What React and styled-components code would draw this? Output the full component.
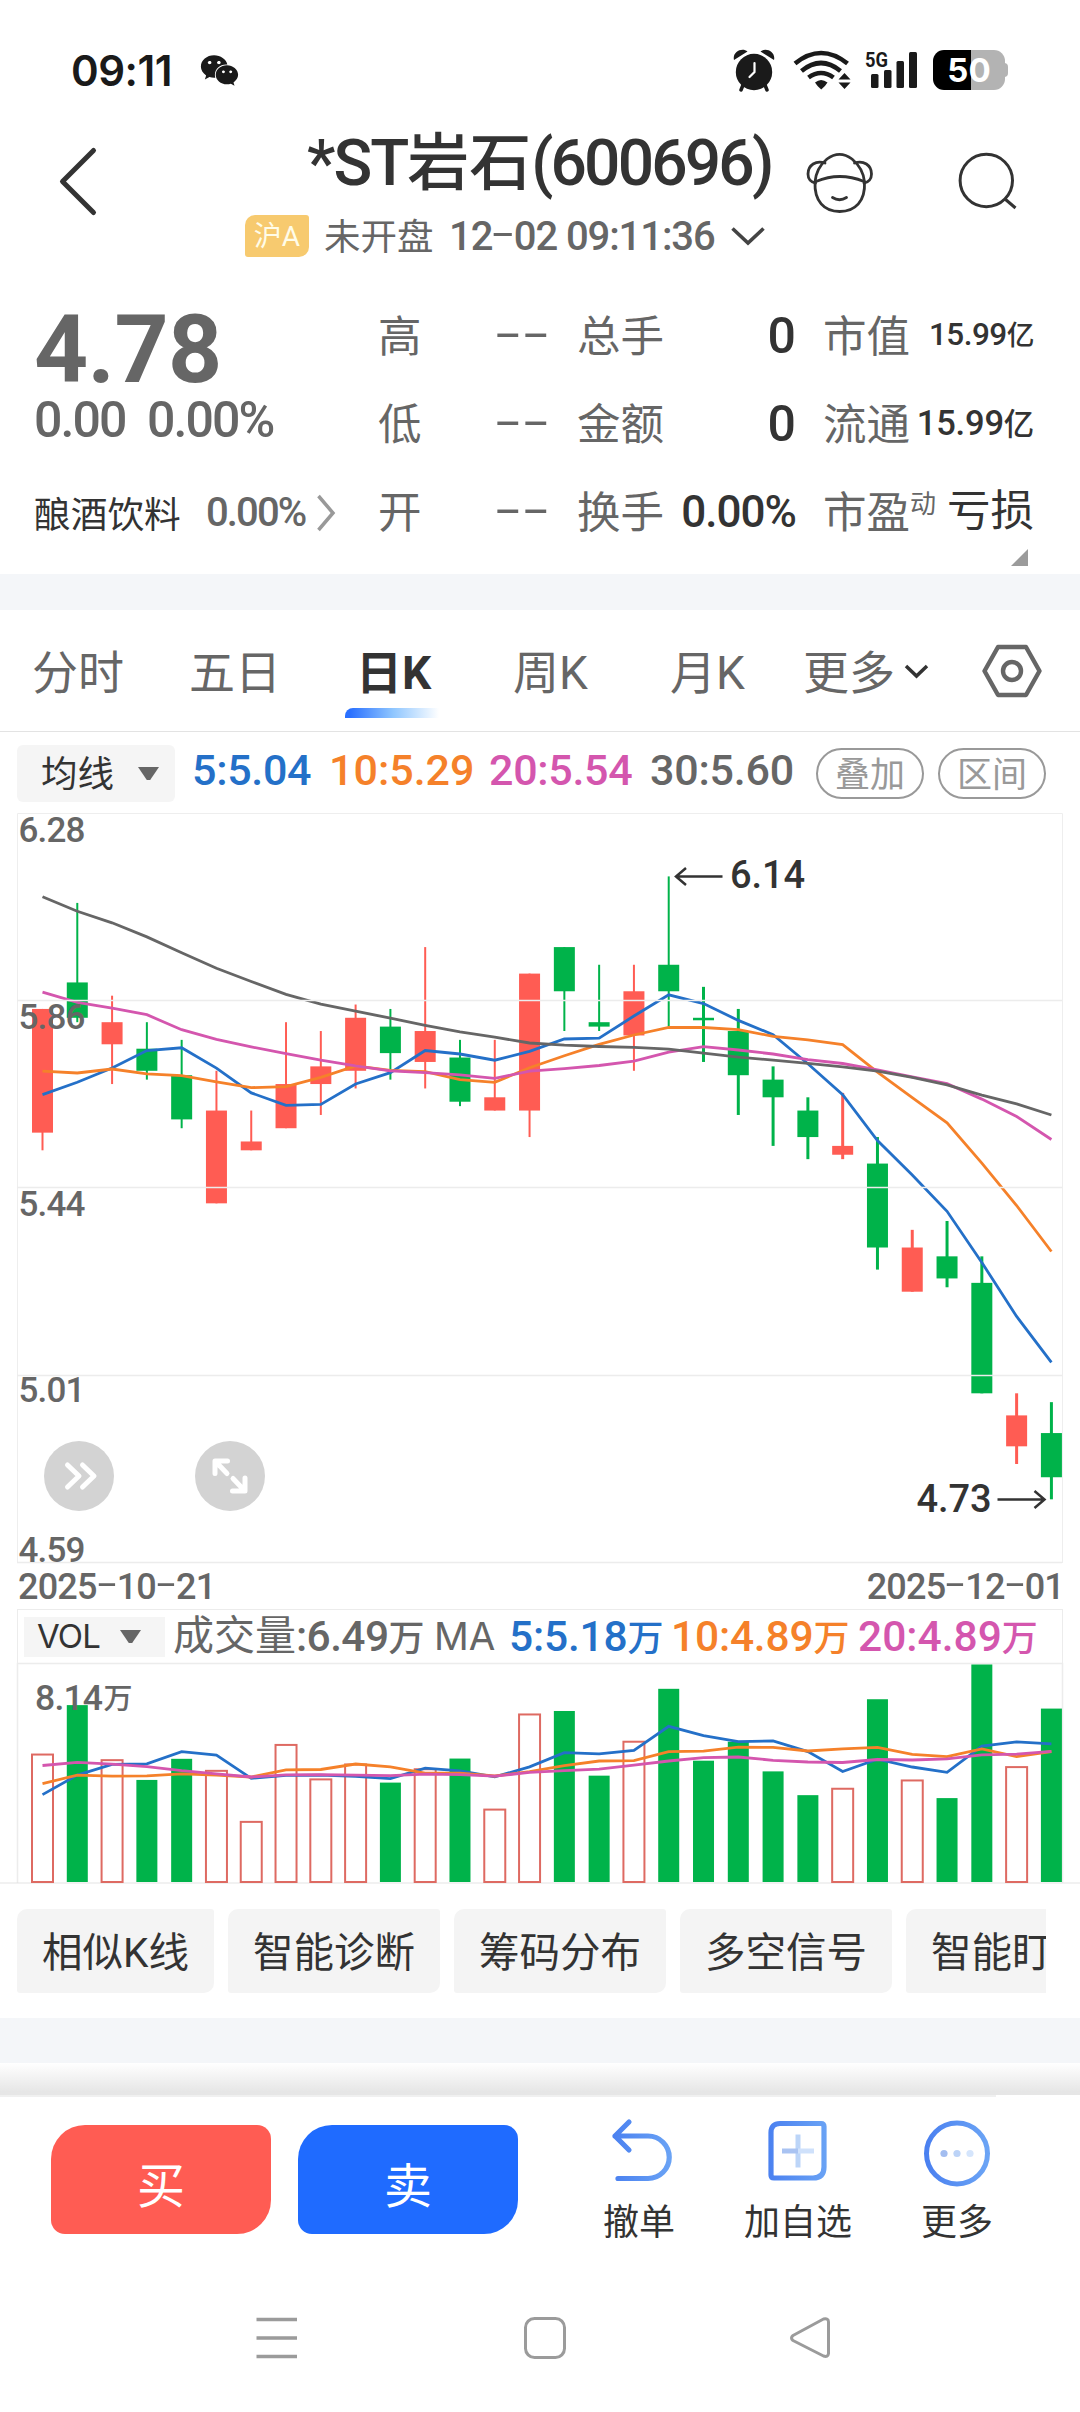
import * as React from 'react';
import styled, { createGlobalStyle } from 'styled-components';
import { FaWeixin } from 'react-icons/fa';

const RED = '#ff5c53';
const GREEN = '#00b34a';
const MA_BLUE = '#2470c8';
const MA_ORANGE = '#f5812a';
const MA_PINK = '#d456ae';
const MA_GREY = '#666666';

const GlobalStyle = createGlobalStyle`
  * {
    box-sizing: border-box;
  }

  body {
    margin: 0;
    background: #ffffff;
    font-family: Roboto, 'Noto Sans CJK SC', sans-serif;
    color: #333333;
  }

  svg {
    display: block;
    flex: none;
    overflow: visible;
  }
`;

const Page = styled.main`
  width: 1080px;
  height: 2412px;
  overflow: hidden;
  display: flex;
  flex-direction: column;
  background: #ffffff;
`;

const Text = styled.span`
  font-family: ${(props) => props.$font || 'inherit'};
  font-size: ${(props) => props.$size}px;
  font-weight: ${(props) => props.$weight || 400};
  letter-spacing: ${(props) => props.$ls || 0}px;
  color: ${(props) => props.$color || 'inherit'};
  width: ${(props) => (props.$w ? `${props.$w}px` : 'auto')};
  padding-top: ${(props) => props.$pt || 0}px;
  line-height: ${(props) => props.$lh || 1.2};
  white-space: pre;
  flex: none;
`;

const Dash = styled.span`
  display: inline-block;
  width: ${(props) => props.$w}px;
  text-align: center;
  letter-spacing: 0;
  font-weight: 400;
  transform: translateY(-0.07em) scaleX(${(props) => props.$stretch || 1.9});
`;

/* ---------- status bar ---------- */

const StatusBar = styled.header`
  height: 110px;
  padding: 30px 72px 0 71px;
  display: flex;
  align-items: center;
  color: #1a1a1a;
`;

const Clock = styled.span`
  font-family: Inter, Roboto, sans-serif;
  font-weight: 600;
  font-size: 42px;
  letter-spacing: -0.5px;
  width: 129px;
`;

const StatusIcons = styled.div`
  display: flex;
  align-items: center;
  gap: 14px;
  margin-left: auto;
`;

const Battery = styled.div`
  position: relative;
  width: 72px;
  height: 40px;
  margin-right: 3px;
  border-radius: 11px;
  background: linear-gradient(90deg, #000000 38px, #b3b3b3 38px);
  color: #ffffff;
  font-family: Inter, Roboto, sans-serif;
  font-weight: 700;
  font-size: 33px;
  line-height: 40px;
  text-align: center;

  &::after {
    content: '';
    position: absolute;
    right: -3px;
    top: 13px;
    width: 4px;
    height: 14px;
    border-radius: 0 4px 4px 0;
    background: #b3b3b3;
  }
`;

const AlarmIcon = () => (
  <svg width="47" height="44" viewBox="731 48 47 44">
    <circle cx="753" cy="72" r="18.2" fill="#1a1a1a" />
    <path d="M733 60c-2-8 8-13 13.500-8.500z M773 60c2-8-8-13-13.500-8.500z" fill="#1a1a1a" />
    <path d="M742 85l-2 5M764 85l2 5" stroke="#1a1a1a" strokeWidth="3.5" strokeLinecap="round" />
    <path d="M753.500 63v9l-5 5" stroke="#fff" strokeWidth="2.200" strokeLinecap="round" fill="none" />
  </svg>
);

const WifiIcon = () => (
  <svg width="58" height="42" viewBox="793 49 58 42">
    <g fill="none" stroke="#1a1a1a" strokeWidth="4.600">
      <path d="M795 63.500q26-21 52.500 0" />
      <path d="M801.500 71q19.500-16 39 0" />
      <path d="M808.500 77.500q12.500-9 25 0" />
    </g>
    <path d="M815 82.500q6-5 12.500 0q-2 3.500-6.300 7q-4.200-3.500-6.200-7z" fill="#1a1a1a" />
    <path d="M838.500 79.500l6-6.500 6 6.500z M838.500 82.500l6 6.500 6-6.500z" fill="#1a1a1a" />
  </svg>
);

const SignalIcon = () => (
  <svg width="54" height="42" viewBox="865 49 54 42">
    <text x="865" y="66.500" fontFamily="Roboto" fontWeight="700" fontSize="21" textLength="23" lengthAdjust="spacingAndGlyphs" fill="#1a1a1a">
      5G
    </text>
    <g fill="#1a1a1a">
      <rect x="871" y="74" width="7.500" height="14" rx="1.500" />
      <rect x="884" y="70" width="7.500" height="18" rx="1.500" />
      <rect x="896.500" y="61" width="7.500" height="27" rx="1.500" />
      <rect x="909" y="52" width="8" height="36" rx="1.500" />
    </g>
  </svg>
);

/* ---------- title ---------- */

const TitleBar = styled.div`
  height: 175px;
  padding: 14px 62px 0 57px;
  display: flex;
  align-items: flex-start;
`;

const TitleBlock = styled.div`
  width: 561px;
  margin-left: 146px;
  display: flex;
  flex-direction: column;
`;

const Title = styled.h1`
  margin: 0 0 0 62px;
  height: 78px;
  line-height: 79px;
  font-size: 62px;
  font-weight: 500;
  white-space: nowrap;
`;

const TitleLatin = styled.span`
  font-size: 64px;
  letter-spacing: ${(props) => props.$ls}px;
`;

const SubTitle = styled.div`
  display: flex;
  align-items: center;
  height: 42px;
  margin-top: 13px;
  color: #666666;
`;

const Market = styled.span`
  width: 64px;
  height: 42px;
  margin-right: 15px;
  border-radius: 10px 3px 10px 3px;
  background: #f7ca6f;
  color: #fffce8;
  font-size: 28px;
  line-height: 44px;
  text-align: center;
`;

const BackIcon = () => (
  <svg width="42" height="72" viewBox="57 145 42 72" style={{ marginTop: 21 }}>
    <path d="M93.500 150.500L62.500 181.500L93.500 212.500" fill="none" stroke="#333" strokeWidth="5" strokeLinecap="round" strokeLinejoin="round" />
  </svg>
);

const MascotIcon = () => (
  <svg width="70" height="64" viewBox="804 150 70 64" style={{ marginTop: 27 }}>
    <g fill="none" stroke="#333" strokeWidth="2.800" strokeLinecap="round">
      <path d="M815 181c-.8 19 9 29.500 24.700 29.500S865.500 200 864.500 181" />
      <path d="M815 181c1-11 6-18 12-23 8-6 17-6 25 0 6 5 11.500 12 12.500 23" />
      <path d="M816 180.500q23.500-10 48 0" />
      <path d="M825 162c-9-3-17 2-17 11 0 5 3 8.500 7.500 9" />
      <path d="M854.500 162c9-3 17 2 17 11 0 5-3 8.500-7.500 9" />
      <path d="M832.500 196.500q7 4.500 14 0" />
    </g>
  </svg>
);

const SearchIcon = () => (
  <svg width="62" height="62" viewBox="956 150 62 62" style={{ margin: '27px 0 0 82px' }}>
    <g fill="none" stroke="#333" strokeWidth="3">
      <circle cx="986.300" cy="179.500" r="26.200" />
      <path d="M1005 198l10.500 9" />
    </g>
  </svg>
);

/* ---------- quote ---------- */

const Quote = styled.section`
  height: 289px;
  display: flex;
  color: #666666;
`;

const PriceColumn = styled.div`
  width: 378px;
  padding: 26px 0 0 34px;
`;

const Line = styled.div`
  display: flex;
  align-items: center;
  height: ${(props) => props.$h}px;
`;

const StatColumn = styled.div`
  width: ${(props) => props.$w}px;
  margin-right: ${(props) => props.$gap}px;
  padding-top: 4px;
`;

const Stat = styled.div`
  display: flex;
  align-items: center;
  justify-content: space-between;
  height: 88px;
  padding-top: 9px;
`;

const StatLabel = styled.span`
  font-size: 43.5px;
  line-height: 52px;
  white-space: nowrap;
`;

const StatValue = styled.span`
  font-size: ${(props) => props.$size}px;
  font-weight: ${(props) => props.$weight || 500};
  letter-spacing: ${(props) => props.$ls || 0}px;
  line-height: 52px;
  color: ${(props) => (props.$muted ? 'inherit' : '#333333')};
  margin-bottom: 4px;
  white-space: nowrap;
`;

const Yi = styled.span`
  font-size: 0.88em;
`;

const Dynamic = styled.sup`
  font-size: 26px;
  line-height: 0;
  vertical-align: 15px;
`;

const Corner = styled.div`
  width: 17px;
  height: 17px;
  margin: -4px 6px 0 auto;
  background: #9b9b9b;
  clip-path: polygon(100% 0, 100% 100%, 0 100%);
`;

const Band = styled.div`
  height: ${(props) => props.$h}px;
  background: #f4f6f9;
  flex: none;
`;

/* ---------- period tabs ---------- */

const Tabs = styled.nav`
  height: 122px;
  padding: 0 38px 0 32px;
  display: flex;
  align-items: center;
  border-bottom: 1px solid #e3e3e3;
  flex: none;
`;

const Tab = styled.div`
  width: ${(props) => props.$w}px;
  height: 121px;
  padding-top: 33px;
  font-size: 46px;
  line-height: 60px;
  font-weight: ${(props) => (props.$active ? 700 : 400)};
  color: ${(props) => (props.$active ? '#333333' : '#666666')};
  white-space: nowrap;

  &::after {
    content: '';
    display: ${(props) => (props.$active ? 'block' : 'none')};
    width: 96px;
    height: 10px;
    margin: 5px 0 0 -11px;
    border-radius: 8px 0 0 0;
    background: linear-gradient(90deg, #2a70ff 5%, #8fc6ff 50%, #ffffff 98%);
  }
`;

/* ---------- indicator bars ---------- */

const IndicatorBar = styled.div`
  height: 81px;
  padding: 2px 0 0 17px;
  display: flex;
  align-items: center;
  flex: none;
`;

const Averages = styled.div`
  display: flex;
  margin: -6px 0 0 17px;
`;

const Select = styled.div`
  width: ${(props) => props.$w}px;
  height: ${(props) => props.$h}px;
  padding: ${(props) => props.$pad};
  border-radius: ${(props) => props.$radius}px;
  background: #f5f5f5;
  color: #333333;
  display: flex;
  align-items: center;
  justify-content: space-between;
  flex: none;
`;

const Triangle = styled.i`
  width: 21px;
  height: 13px;
  background: #666666;
  clip-path: polygon(0 0, 100% 0, 58% 100%, 42% 100%);
`;

const Pill = styled.span`
  width: 108px;
  height: 51px;
  margin-right: 14px;
  border: 2px solid #999999;
  border-radius: 26px;
  color: #999999;
  font-size: 35px;
  line-height: 51px;
  text-align: center;
`;

const DateRow = styled.div`
  height: 46px;
  padding: 4px 16px 0 18px;
  display: flex;
  align-items: center;
  justify-content: space-between;
  color: #666666;
  flex: none;
`;

const VolumeBar = styled.div`
  height: 54px;
  margin: 0 17px;
  padding-left: 6px;
  border: 1px solid #ececec;
  border-bottom: 0;
  display: flex;
  align-items: center;
  color: #666666;
  flex: none;
`;

const Wan = styled.span`
  font-size: 36px;
`;

/* ---------- charts ---------- */

// [high, open, close, low, volume], prices in cents, volume in 万手
const CANDLES = [
  [584, 556, 584, 552, 4.77],
  [608, 590, 582, 581, 6.62],
  [587, 576, 581, 567, 4.56],
  [581, 575, 570, 568, 3.82],
  [577, 569, 559, 557, 4.61],
  [570, 540, 561, 540, 4.16],
  [561, 552, 554, 552, 2.25],
  [581, 557, 567, 557, 5.13],
  [579, 567, 571, 560, 3.84],
  [585, 570, 582, 566, 4.4],
  [584, 580, 574, 568, 3.72],
  [598, 572, 579, 566, 4.22],
  [577, 573, 563, 562, 4.62],
  [577, 561, 564, 561, 2.71],
  [592, 561, 592, 555, 6.27],
  [598, 598, 588, 579, 6.4],
  [594, 581, 580, 579, 3.98],
  [594, 578, 588, 570, 5.25],
  [614, 594, 588, 580, 7.23],
  [589, 582, 582, 572, 4.54],
  [584, 579, 569, 560, 5.25],
  [571, 568, 564, 553, 4.14],
  [564, 561, 555, 550, 3.25],
  [565, 551, 553, 550, 3.49],
  [555, 549, 530, 525, 6.84],
  [534, 520, 530, 520, 3.8],
  [536, 528, 523, 521, 3.14],
  [528, 522, 497, 497, 8.14],
  [497, 485, 492, 481, 4.3],
  [495, 488, 478, 473, 6.49],
];

const RED_DAYS = [0, 2, 5, 6, 7, 8, 9, 11, 13, 14, 17, 23, 25, 28];

const closes = CANDLES.map((c) => c[2]);
const volumes = CANDLES.map((c) => c[4]);

// `seed` holds the averages whose window starts before the first visible day
const average = (values, days, seed) =>
  values.map((_, i) =>
    i < seed.length
      ? seed[i]
      : values.slice(i - days + 1, i + 1).reduce((a, b) => a + b, 0) / days,
  );

const PRICE_LINES = [
  { color: MA_BLUE, values: average(closes, 5, [564.6, 567.4, 570.6, 574.6]) },
  {
    color: MA_ORANGE,
    values: average(closes, 10, [569.9, 569.5, 570.4, 569.3, 568.9, 567.5, 566.2, 566.4, 568.5]),
  },
  {
    color: MA_PINK,
    values: average(closes, 20, [
      587.8, 585.5, 584.2, 582.7, 579.3, 577.1, 575.4, 573.9, 572.4, 571.1, 570, 569.6, 569.1, 568.3,
      569.9, 570.5, 571.2, 572.2, 574.2,
    ]),
  },
  {
    color: MA_GREY,
    values: [
      609.4, 606.1, 603.5, 600.3, 596.7, 593.2, 590.2, 587.3, 585.1, 583.5, 581.9, 580.3, 578.8, 577.6,
      576.3, 575.8, 575.5, 575.3, 574.9, 574, 573.1, 572.4, 571.7, 570.9, 569.9, 568.5, 566.8, 564.5,
      562.5, 560,
    ],
  },
];

const VOLUME_LINES = [
  { color: MA_BLUE, values: average(volumes, 5, [3.27, 4, 4.4, 4.42]) },
  {
    color: MA_ORANGE,
    values: average(volumes, 10, [3.68, 4, 3.96, 3.97, 4.05, 4, 3.93, 4.2, 4.21]),
  },
  {
    color: MA_PINK,
    values: average(volumes, 20, [
      4.36, 4.48, 4.41, 4.32, 4.17, 4.05, 3.93, 4.01, 4.02, 4, 3.98, 4.04, 4.02, 3.96, 4.1, 4.17, 4.22,
      4.37, 4.53,
    ]),
  },
];

const dayX = (i) => 42.5 + i * 34.79;
const priceY = (p) => 63.4 + (614 - p) * 4.418;
const volumeY = (v) => 219 - v * 26.72;

const linePoints = (values, y) => values.map((v, i) => `${dayX(i)},${y(v).toFixed(1)}`).join(' ');

const PRICE_LABELS = [
  ['6.28', 28.7],
  ['5.86', 216],
  ['5.44', 402.6],
  ['5.01', 589.4],
  ['4.59', 749],
];

const ChartArea = styled.div`
  position: relative;
  height: ${(props) => props.$h}px;
  flex: none;
`;

const ChartText = styled.text`
  font-family: Roboto, 'Noto Sans CJK SC', sans-serif;
  font-weight: 500;
`;

const FloatButton = styled.button`
  position: absolute;
  left: ${(props) => props.$left}px;
  top: 628px;
  width: 70px;
  height: 70px;
  padding: 0;
  border: 0;
  border-radius: 50%;
  background: #d3d3d3;
`;

const PriceChart = () => (
  <ChartArea $h={750}>
    <svg width="1080" height="750">
      <path d="M17.500 750V.5H1062.500V750" fill="none" stroke="#eeeeee" />
      {CANDLES.map(([high, open, close, low], i) => {
        const color = RED_DAYS.includes(i) ? RED : GREEN;
        const top = priceY(Math.max(open, close));
        const height = Math.max(Math.abs(open - close) * 4.418, 2.5);
        return (
          <g key={i}>
            <line x1={dayX(i)} x2={dayX(i)} y1={priceY(high)} y2={priceY(low)} stroke={color} strokeWidth={i < 19 ? 2 : 3} />
            <rect x={dayX(i) - 10.5} y={top} width="21" height={height} fill={color} />
          </g>
        );
      })}
      {PRICE_LINES.map(({ color, values }) => (
        <polyline key={color} points={linePoints(values, priceY)} fill="none" stroke={color} strokeWidth="2.800" />
      ))}
      <path d="M17 187.500H1062M17 374.500H1062M17 562.500H1062M17 749.500H1062" stroke="#ececec" strokeWidth="1.500" />
      {PRICE_LABELS.map(([label, y]) => (
        <ChartText key={label} x="18.500" y={y} fontSize="35" textLength="67" fill="#666">
          {label}
        </ChartText>
      ))}
      <g fill="none" stroke="#333" strokeWidth="2.500">
        <path d="M722.500 63.500H676M686 55L676 63.500L686 72" />
        <path d="M997.500 686.500H1044.500M1034.500 678L1044.500 686.500L1034.500 695" />
      </g>
      <ChartText x="730" y="74.800" fontSize="38" textLength="75" fill="#333">
        6.14
      </ChartText>
      <ChartText x="916.500" y="698.700" fontSize="38" textLength="75" fill="#333">
        4.73
      </ChartText>
    </svg>
    <FloatButton $left={44}>
      <svg width="70" height="70" viewBox="0 0 70 70">
        <path d="M23.500 24L35 35L23.500 46M38.500 24L50 35L38.500 46" fill="none" stroke="#fff" strokeWidth="5" strokeLinecap="round" strokeLinejoin="round" />
      </svg>
    </FloatButton>
    <FloatButton $left={195}>
      <svg width="70" height="70" viewBox="0 0 70 70">
        <path d="M32.500 20H20V32.500M21.500 21.500L32 32.500M38 37.500L48.500 48.500M37.500 50H50V37" fill="none" stroke="#fff" strokeWidth="5" strokeLinecap="round" strokeLinejoin="round" />
      </svg>
    </FloatButton>
  </ChartArea>
);

const VolumeChart = () => (
  <ChartArea $h={221}>
    <svg width="1080" height="221">
      <path d="M17.500 220V.5H1062.500V220" fill="none" stroke="#ececec" strokeWidth="1.500" />
      <path d="M0 220H1080" stroke="#e3e3e3" />
      {volumes.map((v, i) => {
        const y = volumeY(v);
        return RED_DAYS.includes(i) ? (
          <rect key={i} x={dayX(i) - 10.5} y={y} width="21" height={219 - y} fill="#fff" stroke="#de6a62" strokeWidth="2" />
        ) : (
          <rect key={i} x={dayX(i) - 10.5} y={y} width="21" height={219 - y} fill={GREEN} />
        );
      })}
      {VOLUME_LINES.map(({ color, values }) => (
        <polyline key={color} points={linePoints(values, volumeY)} fill="none" stroke={color} strokeWidth="2.800" />
      ))}
      <ChartText x="35" y="46.800" fontSize="35.500" textLength="68" fill="#666">
        8.14
      </ChartText>
      <ChartText x="103.500" y="46" fontSize="29" fill="#666">
        万
      </ChartText>
    </svg>
  </ChartArea>
);

/* ---------- shortcuts ---------- */

const Shortcuts = styled.div`
  height: 134px;
  margin: 0 34px 0 17px;
  padding-top: 25px;
  display: flex;
  gap: 14px;
  overflow: hidden;
  flex: none;
`;

const Shortcut = styled.div`
  height: 84px;
  padding: 0 25px;
  border-radius: 10px 3px 10px 3px;
  background: #f4f4f4;
  font-size: 40.5px;
  line-height: 89px;
  white-space: nowrap;
  flex: none;
`;

const Shade = styled.div`
  height: 32px;
  background: linear-gradient(180deg, #ffffff, #e6e6e6 90%);
  flex: none;
`;

const ShadeEdge = styled.div`
  width: 996px;
  height: 2px;
  background: #f0f0f0;
  flex: none;
`;

/* ---------- bottom bar ---------- */

const ActionBar = styled.footer`
  height: 182px;
  padding: 28px 0 0 51px;
  display: flex;
  align-items: flex-start;
  flex: none;
`;

const TradeButton = styled.button`
  width: 220px;
  height: 109px;
  margin-right: 27px;
  padding: 4px 0 0;
  border: 0;
  border-radius: 34px 14px 34px 14px;
  background: ${(props) => props.$bg};
  color: #ffffff;
  font-family: inherit;
  font-size: 48px;
  flex: none;
`;

const Action = styled.div`
  width: ${(props) => props.$w}px;
  margin: -9px 0 0 ${(props) => props.$ml}px;
  display: flex;
  flex-direction: column;
  align-items: center;
  gap: 17px;
  font-size: 36px;
  line-height: 44px;
  white-space: nowrap;
`;

const NavBar = styled.div`
  height: 132px;
  padding: 35px 0 0 254px;
  display: flex;
  align-items: flex-start;
`;

const BlueGradient = ({ id }) => (
  <defs>
    <linearGradient id={id} gradientUnits="userSpaceOnUse" x1="2" y1="0" x2="64" y2="0">
      <stop offset="0" stopColor="#4a80f0" />
      <stop offset="1" stopColor="#6ba4f5" />
    </linearGradient>
  </defs>
);

const UndoIcon = () => (
  <svg width="66" height="68" viewBox="-3 0 66 68">
    <BlueGradient id="undo" />
    <path d="M20 6L6 20L20 34M6 20H39a21 21 0 0 1 0 42.500H9" fill="none" stroke="url(#undo)" strokeWidth="5.200" strokeLinecap="round" strokeLinejoin="round" />
  </svg>
);

const AddIcon = () => (
  <svg width="66" height="68" viewBox="0 0 66 68">
    <BlueGradient id="add" />
    <path d="M15 7.500H56q3 0 3 3V51q0 11-11 11H9q-3 0-3-3V16.500q0-9 9-9z" fill="none" stroke="url(#add)" strokeWidth="5.200" />
    <path d="M33 18.500V51.500" stroke="#bcd5f8" strokeWidth="5" />
    <path d="M17 35H33" stroke="#a9c3f2" strokeWidth="5" />
    <path d="M33 35H49" stroke="#cfe1fb" strokeWidth="5" />
  </svg>
);

const MoreIcon = () => (
  <svg width="66" height="68" viewBox="0 0 66 68">
    <BlueGradient id="more" />
    <circle cx="33" cy="37.500" r="30.500" fill="none" stroke="url(#more)" strokeWidth="5" />
    <circle cx="20" cy="37.500" r="3.600" fill="#a3bdf0" />
    <circle cx="33" cy="37.500" r="3.600" fill="#bcd3f7" />
    <circle cx="46" cy="37.500" r="3.600" fill="#d5e5fc" />
  </svg>
);

const App = () => (
  <>
    <GlobalStyle />
    <Page>
      <StatusBar>
        <Clock>09:11</Clock>
        <FaWeixin size={39} />
        <StatusIcons>
          <AlarmIcon />
          <WifiIcon />
          <SignalIcon />
          <Battery>50</Battery>
        </StatusIcons>
      </StatusBar>

      <TitleBar>
        <BackIcon />
        <TitleBlock>
          <Title>
            <TitleLatin $ls={-2}>*ST</TitleLatin>
            岩石
            <TitleLatin $ls={-2.8}>(600696)</TitleLatin>
          </Title>
          <SubTitle>
            <Market>沪A</Market>
            <Text $size={36.5} $w={125} $pt={3}>
              未开盘
            </Text>
            <Text $size={40} $ls={-1.1} $w={281} $weight={500} $pt={2}>
              12
              <Dash $w={21.5}>-</Dash>
              02 09:11:36
            </Text>
            <svg width="36" height="22" viewBox="0 0 36 22">
              <path d="M2.500 3.500L18 18L33.500 3.500" fill="none" stroke="#444" strokeWidth="3.600" />
            </svg>
          </SubTitle>
        </TitleBlock>
        <MascotIcon />
        <SearchIcon />
      </TitleBar>

      <Quote>
        <PriceColumn>
          <Line $h={78}>
            <Text $size={94.5} $weight={700} $ls={-0.6} $lh={0.8}>
              4.78
            </Text>
          </Line>
          <Line $h={61}>
            <Text $size={50} $w={113} $ls={-1.9} $weight={500} $lh={1}>
              0.00
            </Text>
            <Text $size={50} $ls={-1.9} $weight={500} $lh={1}>
              0.00%
            </Text>
          </Line>
          <Line $h={126}>
            <Text $size={36.7} $w={172} $color="#333" $pt={6}>
              酿酒饮料
            </Text>
            <Text $size={40} $w={110} $ls={-1.9} $weight={500}>
              0.00%
            </Text>
            <svg width="20" height="40" viewBox="0 0 20 40">
              <path d="M2.500 3L17 20L2.500 37" fill="none" stroke="#999" strokeWidth="3.500" />
            </svg>
          </Line>
        </PriceColumn>
        <StatColumn $w={171} $gap={28}>
          {['高', '低', '开'].map((label) => (
            <Stat key={label}>
              <StatLabel>{label}</StatLabel>
              <StatValue $size={46} $muted>
                <Dash $w={27.5} $stretch={1.9}>
                  -
                </Dash>
                <Dash $w={27.5} $stretch={1.9}>
                  -
                </Dash>
              </StatValue>
            </Stat>
          ))}
        </StatColumn>
        <StatColumn $w={219} $gap={27}>
          <Stat>
            <StatLabel>总手</StatLabel>
            <StatValue $size={50}>0</StatValue>
          </Stat>
          <Stat>
            <StatLabel>金额</StatLabel>
            <StatValue $size={50}>0</StatValue>
          </Stat>
          <Stat>
            <StatLabel>换手</StatLabel>
            <StatValue $size={44} $ls={-1}>
              0.00%
            </StatValue>
          </Stat>
        </StatColumn>
        <StatColumn $w={211} $gap={0}>
          <Stat>
            <StatLabel>市值</StatLabel>
            <StatValue $size={31.5} $ls={-0.5}>
              15.99<Yi>亿</Yi>
            </StatValue>
          </Stat>
          <Stat>
            <StatLabel>流通</StatLabel>
            <StatValue $size={34.5} $ls={-0.2}>
              15.99<Yi>亿</Yi>
            </StatValue>
          </Stat>
          <Stat>
            <StatLabel>
              市盈<Dynamic>动</Dynamic>
            </StatLabel>
            <StatValue $size={43.5} $weight={400}>
              亏损
            </StatValue>
          </Stat>
          <Corner />
        </StatColumn>
      </Quote>

      <Band $h={36} />

      <Tabs>
        <Tab $w={157}>分时</Tab>
        <Tab $w={167}>五日</Tab>
        <Tab $w={157} $active>
          日K
        </Tab>
        <Tab $w={157}>周K</Tab>
        <Tab $w={133}>月K</Tab>
        <Tab $w={101}>更多</Tab>
        <svg width="25" height="16" viewBox="0 0 25 16">
          <path d="M2 3L12.500 13L23 3" fill="none" stroke="#333" strokeWidth="3.500" />
        </svg>
        <svg width="60" height="54" viewBox="0 0 60 54" style={{ marginLeft: 'auto' }}>
          <path d="M16 3H44L57.500 27L44 51H16L2.500 27z" fill="none" stroke="#666" strokeWidth="4.400" strokeLinejoin="round" />
          <circle cx="30" cy="27" r="9" fill="none" stroke="#666" strokeWidth="4.400" />
        </svg>
      </Tabs>

      <IndicatorBar>
        <Select $w={158} $h={57} $pad="0 16px 0 24px" $radius={6}>
          <Text $size={36.5} $pt={2}>
            均线
          </Text>
          <Triangle />
        </Select>
        <Averages>
          <Text $size={43} $weight={500} $color={MA_BLUE} $w={137} $ls={-0.3}>
            5:5.04
          </Text>
          <Text $size={43} $weight={500} $color={MA_ORANGE} $w={160}>
            10:5.29
          </Text>
          <Text $size={43} $weight={500} $color={MA_PINK} $w={161} $ls={-0.3}>
            20:5.54
          </Text>
          <Text $size={43} $weight={500} $color={MA_GREY} $w={166} $ls={-0.2}>
            30:5.60
          </Text>
        </Averages>
        <Pill>叠加</Pill>
        <Pill>区间</Pill>
      </IndicatorBar>

      <PriceChart />

      <DateRow>
        <Text $size={36} $weight={500} $ls={-0.8}>
          2025
          <Dash $w={20}>-</Dash>
          10
          <Dash $w={20}>-</Dash>
          21
        </Text>
        <Text $size={36} $weight={500} $ls={-0.8}>
          2025
          <Dash $w={20}>-</Dash>
          12
          <Dash $w={20}>-</Dash>
          01
        </Text>
      </DateRow>

      <VolumeBar>
        <Select $w={141} $h={40} $pad="0 24px 0 13px" $radius={0}>
          <Text $size={33} $font="Inter, sans-serif" $ls={-0.8}>
            VOL
          </Text>
          <Triangle />
        </Select>
        <Text $size={41} $pt={1} style={{ marginLeft: 8 }}>
          成交量
        </Text>
        <Text $size={42.5} $weight={500} $w={138} $ls={-0.6}>
          :6.49<Wan>万</Wan>
        </Text>
        <Text $size={38.5} $w={75} $font="Inter, sans-serif">
          MA
        </Text>
        <Text $size={42.5} $weight={500} $color={MA_BLUE} $w={162} $ls={-0.2}>
          5:5.18<Wan>万</Wan>
        </Text>
        <Text $size={42.5} $weight={500} $color={MA_ORANGE} $w={187} $ls={-0.2}>
          10:4.89<Wan>万</Wan>
        </Text>
        <Text $size={42.5} $weight={500} $color={MA_PINK} $w={180}>
          20:4.89<Wan>万</Wan>
        </Text>
      </VolumeBar>

      <VolumeChart />

      <Shortcuts>
        {['相似K线', '智能诊断', '筹码分布', '多空信号', '智能盯盘'].map((label) => (
          <Shortcut key={label}>{label}</Shortcut>
        ))}
      </Shortcuts>

      <Band $h={45} />
      <Shade />
      <ShadeEdge />

      <ActionBar>
        <TradeButton $bg={RED}>买</TradeButton>
        <TradeButton $bg="#1f6bff">卖</TradeButton>
        <Action $w={72} $ml={58}>
          <UndoIcon />
          撤单
        </Action>
        <Action $w={110} $ml={68}>
          <AddIcon />
          加自选
        </Action>
        <Action $w={72} $ml={68}>
          <MoreIcon />
          更多
        </Action>
      </ActionBar>

      <NavBar>
        <svg width="46" height="46" viewBox="0 0 46 46">
          <path d="M2.500 5.500H43M2.500 24H43M2.500 42.500H43" stroke="#9b9b9b" strokeWidth="3.600" />
        </svg>
        <svg width="46" height="46" viewBox="0 0 46 46" style={{ marginLeft: 222 }}>
          <rect x="3.500" y="4.500" width="39" height="39" rx="9" fill="none" stroke="#9b9b9b" strokeWidth="3" />
        </svg>
        <svg width="46" height="46" viewBox="0 0 46 46" style={{ marginLeft: 220 }}>
          <path d="M5 21.500L35.500 5Q40.500 4 40.500 8V39.500Q40 43.500 35.500 42L5 26.500Q2 24 5 21.500z" fill="none" stroke="#9b9b9b" strokeWidth="3" strokeLinejoin="round" />
        </svg>
      </NavBar>
    </Page>
  </>
);

export default App;
